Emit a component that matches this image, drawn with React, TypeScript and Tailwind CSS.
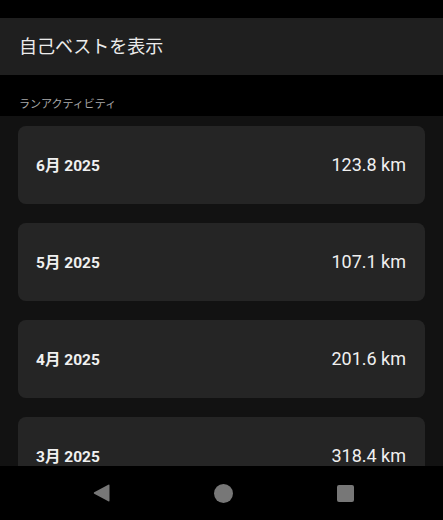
const months = [
  { label: "6月 2025", km: "123.8 km" },
  { label: "5月 2025", km: "107.1 km" },
  { label: "4月 2025", km: "201.6 km" },
  { label: "3月 2025", km: "318.4 km" },
];

const font = "font-['Roboto','Noto_Sans_CJK_JP',sans-serif]";

export default function App() {
  return (
    <div className={`w-[443px] h-[520px] bg-black flex flex-col overflow-hidden ${font}`}>
      {/* status bar */}
      <div className="h-[18px] shrink-0 bg-black" />

      {/* header */}
      <div className="h-[57px] shrink-0 bg-[#1f1f1f] flex items-center px-[19px]">
        <span className="text-[18px] text-[#ececec]">自己ベストを表示</span>
      </div>

      <div className="h-[41px] shrink-0 bg-black flex items-end px-[19px] pb-[3px]">
        <span className="text-[11px] text-[#a8a8a8]">ランアクティビティ</span>
      </div>

      {/* list */}
      <div className="flex-1 bg-[#121212] px-[18px] pt-[10px] flex flex-col gap-[19px] overflow-hidden">
        {months.map((m) => (
          <div
            key={m.label}
            className="h-[78px] shrink-0 rounded-[8px] bg-[#252525] flex items-center pl-[18px] pr-[19px]"
          >
            <div className="flex-1 flex items-baseline justify-between leading-[24px]">
              <span className="text-[15.5px] font-bold text-[#f0f0f0]">{m.label}</span>
              <span className="text-[18px] text-[#f0f0f0]">{m.km}</span>
            </div>
          </div>
        ))}
      </div>

      {/* nav bar */}
      <div className="h-[54px] shrink-0 bg-black flex items-center justify-center gap-[104px] pl-[4px]">
        <svg width="17" height="18" viewBox="0 0 17 18">
          <path d="M16.5 1.5 L16.5 16.5 Q16.5 17.8 15.3 17.2 L1.2 9.8 Q0.2 9 1.2 8.2 L15.3 0.8 Q16.5 0.2 16.5 1.5 Z" fill="#777" />
        </svg>
        <div className="w-[19px] h-[19px] rounded-full bg-[#777]" />
        <div className="w-[17px] h-[17px] rounded-[2px] bg-[#777]" />
      </div>
    </div>
  );
}
